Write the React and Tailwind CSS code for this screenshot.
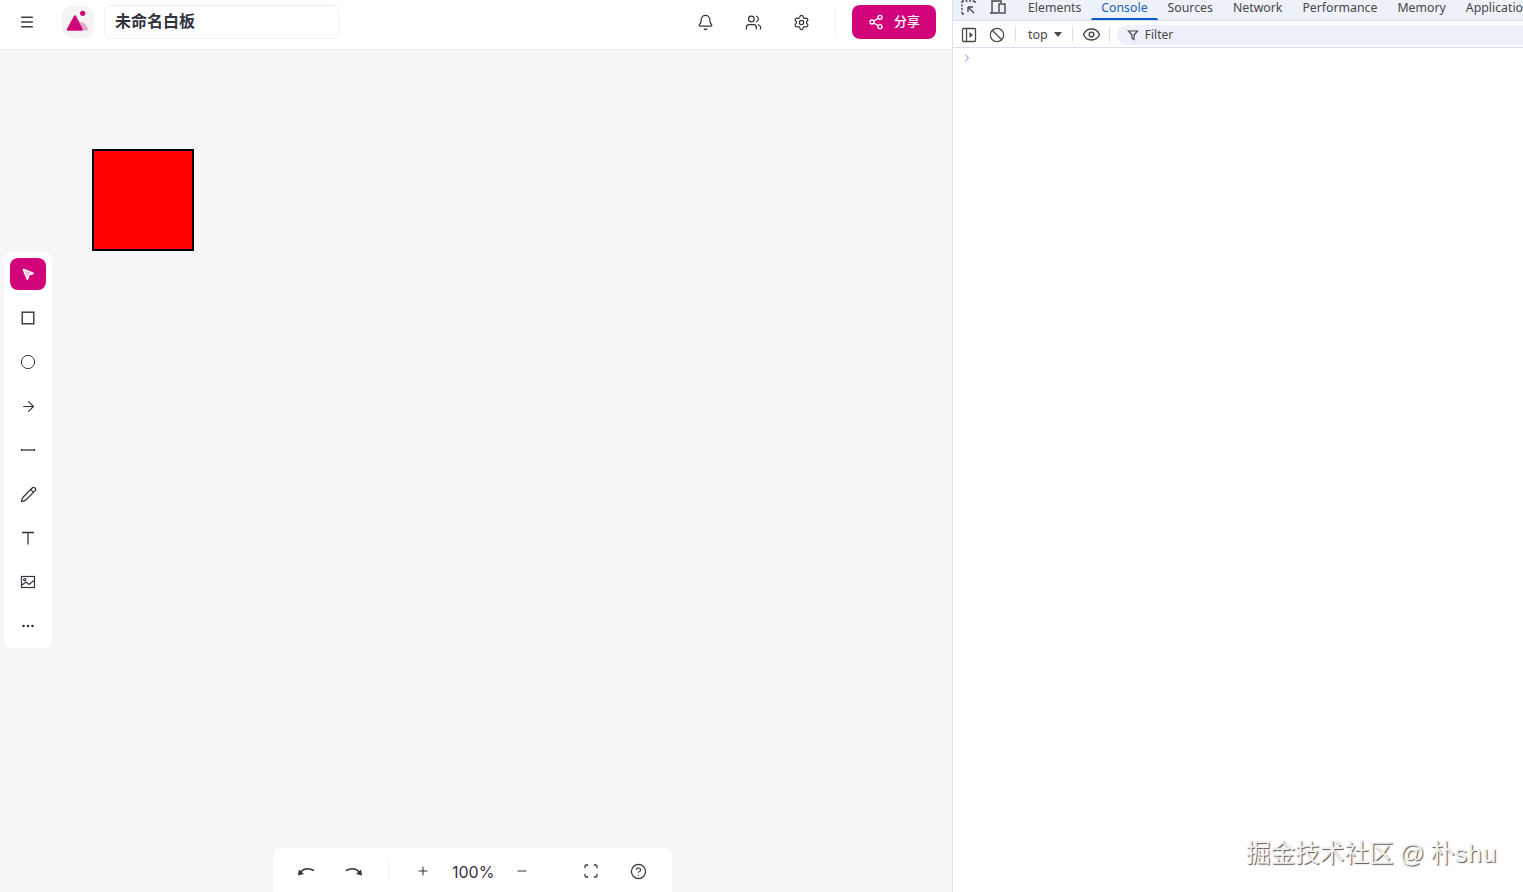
import {
  Menu,
  Bell,
  Users,
  Settings,
  Share2,
  MousePointer2,
  Circle,
  ArrowRight,
  Pencil,
  Plus,
  Minus,
  Scan,
  CircleHelp,
  ChevronRight,
  Eye,
  Ban,
} from "lucide-react";

const SANS = "font-['Inter','Noto_Sans_CJK_SC',sans-serif]";

function SquareIcon() {
  return (
    <svg width="16" height="16" viewBox="0 0 16 16" fill="none" stroke="currentColor" strokeWidth="1.4">
      <rect x="2.2" y="2.2" width="11.6" height="11.6" />
    </svg>
  );
}

function LineIcon() {
  return (
    <svg width="16" height="16" viewBox="0 0 16 16" fill="none" stroke="currentColor">
      <path d="M1.5 8 H14.5" strokeWidth="1.3" />
      <path d="M1.5 7 V9 M14.5 7 V9" strokeWidth="1.2" />
    </svg>
  );
}

function TextIcon() {
  return (
    <svg width="16" height="16" viewBox="0 0 16 16" fill="none" stroke="currentColor" strokeWidth="1.3">
      <path d="M2 2.5 H14 M8 2.5 V14.5" />
    </svg>
  );
}

function ImageIcon() {
  return (
    <svg width="16" height="16" viewBox="0 0 16 16" fill="none" stroke="currentColor" strokeWidth="1.2">
      <rect x="1.5" y="2.5" width="13" height="11" />
      <circle cx="4.8" cy="5.6" r="1.1" />
      <path d="M2 11 L6 8 L9 10.5 L14 6.5" />
    </svg>
  );
}

function DotsIcon() {
  return (
    <svg width="16" height="16" viewBox="0 0 16 16" fill="currentColor">
      <circle cx="3.5" cy="8" r="1.3" />
      <circle cx="8" cy="8" r="1.3" />
      <circle cx="12.5" cy="8" r="1.3" />
    </svg>
  );
}

function CurveArrow({ className }) {
  return (
    <svg width="18" height="11" viewBox="0 0 18 11" fill="none" className={className}>
      <path d="M3.5 6 C7 2.5 12 2 17 4.5" stroke="currentColor" strokeWidth="1.4" />
      <path d="M1 9.5 L1.8 3.5 L7 8 Z" fill="currentColor" />
    </svg>
  );
}

function PanelIcon() {
  return (
    <svg width="16" height="16" viewBox="0 0 16 16" fill="none" stroke="#474747" strokeWidth="1.3" className="ml-2 shrink-0">
      <rect x="1.5" y="1.5" width="13" height="13" rx="1" />
      <path d="M5.5 1.5 V14.5" />
      <path d="M8.5 5 L12 8 L8.5 11 Z" fill="#474747" stroke="none" />
    </svg>
  );
}

function FilterIcon() {
  return (
    <svg width="12" height="12" viewBox="0 0 12 12" fill="none" stroke="#474747" strokeWidth="1.2" className="shrink-0">
      <path d="M1.5 2 H10.5 L7 6 V10.5 L5 9.5 V6 Z" />
    </svg>
  );
}

const tools = [
  { icon: <SquareIcon /> },
  { icon: <Circle size={16} strokeWidth={1.5} /> },
  { icon: <ArrowRight size={17} strokeWidth={1.6} /> },
  { icon: <LineIcon /> },
  { icon: <Pencil size={17} strokeWidth={1.7} /> },
  { icon: <TextIcon /> },
  { icon: <ImageIcon /> },
  { icon: <DotsIcon /> },
];

const tabs = ["Elements", "Console", "Sources", "Network", "Performance", "Memory", "Application"];

function Logo() {
  return (
    <div className="flex h-8 w-8 items-center justify-center rounded-[10px] bg-[#f4f4f5]">
      <svg width="24" height="24" viewBox="0 0 24 24">
        <path d="M13 13 C17 11 20 13 22.5 20.5 L14 20.5 Z" fill="#e3a9cd" />
        <path d="M2 19.5 L9 6.5 L15.5 19.5 Z" fill="#d1047a" strokeLinejoin="round" stroke="#d1047a" strokeWidth="2.5" />
        <circle cx="16.7" cy="3.3" r="2.6" fill="#d1047a" />
      </svg>
    </div>
  );
}

function Header() {
  return (
    <header className="flex h-[50px] shrink-0 items-center border-b border-[#ececf0] bg-white pb-[5px]">
      <Menu size={16} strokeWidth={2.2} className="ml-[19px] text-[#3a3a44]" />
      <div className="ml-[27px]">
        <Logo />
      </div>
      <div className="ml-[10px] flex h-[34px] w-[235px] items-center rounded-md border border-[#f1f1f4] pb-[2px] pl-[10px] text-base font-bold text-[#33333d]">
        未命名白板
      </div>
      <div className="ml-auto flex items-center text-[#33333d]">
        <Bell size={17} strokeWidth={1.7} />
        <Users size={17} strokeWidth={1.7} className="ml-[31px]" />
        <Settings size={17} strokeWidth={1.7} className="ml-[31px]" />
        <div className="ml-[25px] h-[30px] w-px bg-[#f1f1f4]" />
        <button className="ml-4 mr-4 flex h-[34px] w-[84px] items-center justify-center gap-[10px] rounded-lg bg-[#d1047a] text-[13px] font-medium text-white">
          <Share2 size={16} strokeWidth={2} />
          分享
        </button>
      </div>
    </header>
  );
}

function Toolbar() {
  return (
    <div className="absolute left-1 top-[202px] flex h-[396px] w-12 flex-col items-center rounded-lg bg-white pt-[6px]">
      <button className="mb-[6px] flex h-8 w-9 shrink-0 items-center justify-center rounded-lg bg-[#d1047a]">
        <MousePointer2 size={14} strokeWidth={2.4} fill="#f3b6d8" stroke="white" />
      </button>
      {tools.map((t, i) => (
        <div key={i} className="flex h-11 w-9 shrink-0 items-center justify-center text-[#35353f]">
          {t.icon}
        </div>
      ))}
    </div>
  );
}

function BottomBar() {
  return (
    <div className="absolute bottom-0 left-[273px] flex h-11 w-[399px] items-center rounded-t-lg bg-white pt-[2px] text-[#35353f]">
      <CurveArrow className="ml-[24px]" />
      <CurveArrow className="ml-[30px] -scale-x-100" />
      <div className="ml-[25px] h-[20px] w-px bg-[#f1f1f4]" />
      <Plus size={14} strokeWidth={1.8} className="ml-[27px]" />
      <span className="ml-[22px] mt-px w-[42px] text-center text-base font-normal">100%</span>
      <Minus size={14} strokeWidth={1.8} className="ml-[21px]" />
      <Scan size={16} strokeWidth={1.9} className="ml-[54px]" />
      <CircleHelp size={17} strokeWidth={1.7} className="ml-[31px]" />
    </div>
  );
}

function Canvas() {
  return (
    <div className="relative min-h-0 flex-1 overflow-hidden bg-[#f6f6f6]">
      <div className="absolute left-[92px] top-[99px] h-[102px] w-[102px] border-2 border-black bg-[#ff0000]" />
      <Toolbar />
      <BottomBar />
    </div>
  );
}

function DevTools() {
  return (
    <div className="relative flex min-w-0 flex-1 flex-col border-l border-[#d6e2fb] bg-white font-['Noto_Sans',sans-serif] text-xs text-[#474747]">
      <div className="flex h-[21px] shrink-0 items-center overflow-hidden border-b border-[#d8deee] bg-[#edf2fa]">
        <svg width="16" height="16" viewBox="0 0 16 16" className="ml-2 -mt-1 shrink-0" fill="none" stroke="#474747" strokeWidth="1.4">
          <path d="M1 1h13M1 1v13M1 14h3M14 1v3" strokeDasharray="2 1.5" />
          <path d="M7 7l6 6M7 7h5M7 7v5" />
        </svg>
        <svg width="18" height="16" viewBox="0 0 18 16" className="ml-[12px] -mt-1 shrink-0" fill="none" stroke="#474747" strokeWidth="1.4">
          <path d="M1 13h8M3 13V1h9v2" />
          <rect x="10" y="4" width="6" height="9" />
        </svg>
        <div className="ml-[11px] flex shrink-0 -mt-[3px] text-[12.3px]">
          {tabs.map((t) => (
            <div key={t} className={t === "Console" ? "relative px-[10px] text-[#1f5fb0]" : "px-[10px]"}>
              {t}
              {t === "Console" && <div className="absolute -bottom-[3px] left-0 right-0 h-[2px] rounded-t bg-[#0b57d0]" />}
            </div>
          ))}
        </div>
      </div>
      <div className="mt-px flex h-[26px] shrink-0 items-center border-b border-[#d8deee] bg-white">
        <PanelIcon />
        <Ban size={16} strokeWidth={1.8} className="ml-[12px]" />
        <div className="ml-[10px] h-[15px] w-px bg-[#d8deee]" />
        <span className="ml-[12px] mt-px text-[12.5px]">top</span>
        <span className="ml-[6px] h-0 w-0 border-x-4 border-t-[5px] border-x-transparent border-t-[#474747]" />
        <div className="ml-[10px] h-[15px] w-px bg-[#d8deee]" />
        <Eye size={19} strokeWidth={1.8} className="ml-[9px]" />
        <div className="ml-[8px] h-[15px] w-px bg-[#d8deee]" />
        <div className="ml-[7px] flex h-5 flex-1 items-center rounded-l-full bg-[#edf2fa] pl-[10px]">
          <FilterIcon />
          <span className="ml-[6px]">Filter</span>
        </div>
      </div>
      <ChevronRight size={12} strokeWidth={1.8} className="ml-[8px] mt-[4px] text-[#4f78cc]" />
      <div className="absolute bottom-[21px] left-[293px] whitespace-nowrap font-['Liberation_Sans','Noto_Sans_CJK_SC',sans-serif] text-[24.6px] leading-[34px] [word-spacing:-1px] text-[#f2f2f2] [text-shadow:1px_1px_1px_#555]">
        掘金技术社区 @ 朴<span className="tracking-[1px]">shu</span>
      </div>
    </div>
  );
}

export default function App() {
  return (
    <div className={`flex h-[892px] w-[1523px] overflow-hidden bg-white ${SANS}`}>
      <div className="flex w-[952px] shrink-0 flex-col">
        <Header />
        <Canvas />
      </div>
      <DevTools />
    </div>
  );
}
